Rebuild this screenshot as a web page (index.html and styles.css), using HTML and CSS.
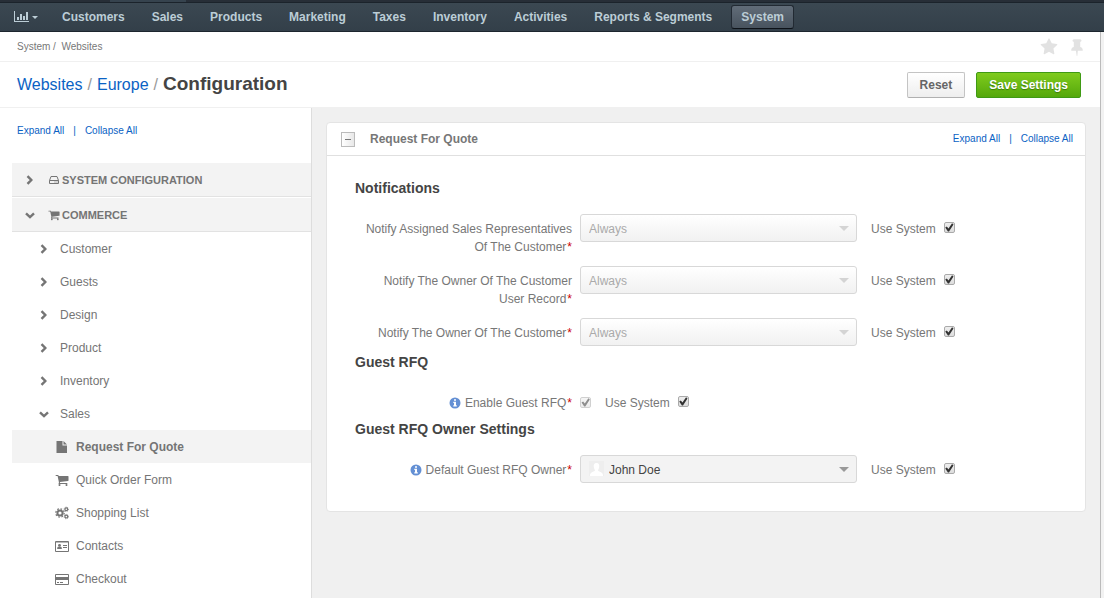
FILE: index.html
```html
<!DOCTYPE html>
<html lang="en">
<head>
<meta charset="utf-8">
<title>Configuration - Europe - Websites</title>
<meta name="viewport" content="width=device-width, initial-scale=1">
<link rel="stylesheet" href="styles.css">
</head>
<body>
<svg class="sprite" aria-hidden="true">
  <symbol id="cart" viewBox="0 0 1792 1792"><path d="M704 1536q0 52-38 90t-90 38-90-38-38-90 38-90 90-38 90 38 38 90zm896 0q0 52-38 90t-90 38-90-38-38-90 38-90 90-38 90 38 38 90zm128-1088v512q0 24-16.5 42.5t-40.5 21.5l-1044 122q13 60 13 70 0 16-24 64h920q26 0 45 19t19 45-19 45-45 19h-1024q-26 0-45-19t-19-45q0-11 8-31.5t16-36 21.5-40 15.5-29.5l-177-823h-204q-26 0-45-19t-19-45 19-45 45-19h256q16 0 28.5 6.5t19.5 15.5 13 24.5 8 26 5.5 29.5 4.5 26h1201q26 0 45 19t19 45z"/></symbol>
  <symbol id="star" viewBox="0 0 1792 1792"><path d="M1728 647q0 22-26 48l-363 354 86 500q1 7 1 20 0 21-10.5 35.5t-30.5 14.5q-19 0-40-12l-449-236-449 236q-22 12-40 12-21 0-31.5-14.5t-10.5-35.5q0-6 2-20l86-500-364-354q-25-27-25-48 0-37 56-46l502-73 225-455q19-41 49-41t49 41l225 455 502 73q56 9 56 46z"/></symbol>
  <symbol id="pin" viewBox="0 0 1792 1792"><path d="M1472 1216q0 26-19 45t-45 19h-429l-51 483q-2 12-10.5 20.5t-20.5 8.5h-1q-27 0-32-27l-76-485h-404q-26 0-45-19t-19-45q0-123 78.5-221.5t177.5-98.5v-512q-52 0-90-38t-38-90 38-90 90-38h640q52 0 90 38t38 90-38 90-90 38v512q99 0 177.5 98.5t78.5 221.5z"/></symbol>
  <symbol id="right" viewBox="0 0 10 10"><path d="M2.5 1.2 6.3 5 2.5 8.8" fill="none" stroke="currentColor" stroke-width="2.4"/></symbol>
  <symbol id="down" viewBox="0 0 10 10"><path d="M1 3.4 5 7.2 9 3.4" fill="none" stroke="currentColor" stroke-width="2.4"/></symbol>
  <symbol id="drive" viewBox="0 0 12 12"><path d="M1.5 6.5 3 2.500h6l1.500 4v3h-9zM1.500 6.500h9M6.500 8h1M8.500 8h1" fill="none" stroke="currentColor"/></symbol>
  <symbol id="file" viewBox="0 0 12 14"><path d="M.5 1h6v4.500h4.500V13H.5zM7.500 1 11 4.500H7.500z"/></symbol>
  <symbol id="cogs" viewBox="0 0 14 14"><g fill="none" stroke="currentColor"><circle cx="5" cy="7" r="2.600" stroke-width="2"/><circle cx="5" cy="7" r="4.200" stroke-width="1.200" stroke-dasharray="1.650 1.650"/><circle cx="11.300" cy="3.300" r="1.400" stroke-width="1.200"/><circle cx="11.300" cy="3.300" r="2.200" stroke-width=".8" stroke-dasharray=".86 .86"/><circle cx="11.300" cy="10.600" r="1.400" stroke-width="1.200"/><circle cx="11.300" cy="10.600" r="2.200" stroke-width=".8" stroke-dasharray=".86 .86"/></g></symbol>
  <symbol id="card" viewBox="0 0 14 14"><path d="M.5 2.500h13v10H.5z" fill="none" stroke="currentColor"/><path d="M1 2h12v1.500H1z"/><circle cx="4.500" cy="6.300" r="1.400"/><path d="M2.200 10V8.800Q2.600 7.500 4.500 7.500T6.800 8.800V10zM8 6h4v1H8zM8 8h4v1H8z"/></symbol>
  <symbol id="credit" viewBox="0 0 14 14"><path d="M.5 2.500h13v10H.5z" fill="none" stroke="currentColor"/><path d="M1 5h12v3H1zM2 10h2v1H2zM5 10h3v1H5z"/></symbol>
  <symbol id="info" viewBox="0 0 12 12"><circle cx="6" cy="6" r="5.500"/><path fill="#fff" d="M5 2.200h2v1.600H5zM4.300 4.800H7v3.400h.8v1.200H4.300V8.200H5V6h-.7z"/></symbol>
</svg>

<header class="top">
  <div class="strip"></div>
  <nav class="nav">
    <a class="nav-item nav-dash" href="#" aria-label="Dashboards">
      <svg width="15" height="12" viewBox="0 0 15 12"><path d="M0 0h1v10h14v1H0zM3 6h2v3H3zM6 3h2v6H6zM9 5h2v4H9zM12 1h2v8h-2z"/></svg>
      <i class="nav-caret"></i>
    </a>
    <a class="nav-item" href="#">Customers</a>
    <a class="nav-item" href="#">Sales</a>
    <a class="nav-item" href="#">Products</a>
    <a class="nav-item" href="#">Marketing</a>
    <a class="nav-item" href="#">Taxes</a>
    <a class="nav-item" href="#">Inventory</a>
    <a class="nav-item" href="#">Activities</a>
    <a class="nav-item" href="#">Reports &amp; Segments</a>
    <a class="nav-item nav-active" href="#">System</a>
  </nav>
</header>

<div class="page">
  <div class="crumbs">
    <span>System /&nbsp; Websites</span>
    <div class="marks">
      <button class="mark" aria-label="Favorite"><svg width="18" height="18"><use href="#star"/></svg></button>
      <button class="mark" aria-label="Pin"><svg width="18" height="18"><use href="#pin"/></svg></button>
    </div>
  </div>
  <div class="title">
    <div class="path"><a href="#">Websites</a><span class="slash">/</span><a href="#">Europe</a><span class="slash">/</span><h1>Configuration</h1></div>
    <div class="actions">
      <button class="btn">Reset</button>
      <button class="btn btn-save">Save Settings</button>
    </div>
  </div>

  <div class="columns">
    <aside class="side">
      <div class="toggles side-toggles"><a href="#">Expand All</a><span>|</span><a href="#">Collapse All</a></div>
      <nav class="tree">
        <a class="group" href="#"><svg class="chev"><use href="#right"/></svg><svg class="gicon"><use href="#drive"/></svg>SYSTEM CONFIGURATION</a>
        <a class="group" href="#"><svg class="chev"><use href="#down"/></svg><svg class="gicon"><use href="#cart"/></svg>COMMERCE</a>
        <a class="node" href="#"><svg class="chev"><use href="#right"/></svg>Customer</a>
        <a class="node" href="#"><svg class="chev"><use href="#right"/></svg>Guests</a>
        <a class="node" href="#"><svg class="chev"><use href="#right"/></svg>Design</a>
        <a class="node" href="#"><svg class="chev"><use href="#right"/></svg>Product</a>
        <a class="node" href="#"><svg class="chev"><use href="#right"/></svg>Inventory</a>
        <a class="node" href="#"><svg class="chev"><use href="#down"/></svg>Sales</a>
        <a class="leaf leaf-active" href="#"><svg class="licon"><use href="#file"/></svg>Request For Quote</a>
        <a class="leaf" href="#"><svg class="licon"><use href="#cart"/></svg>Quick Order Form</a>
        <a class="leaf" href="#"><svg class="licon"><use href="#cogs"/></svg>Shopping List</a>
        <a class="leaf" href="#"><svg class="licon"><use href="#card"/></svg>Contacts</a>
        <a class="leaf" href="#"><svg class="licon"><use href="#credit"/></svg>Checkout</a>
      </nav>
    </aside>

    <main class="main">
      <section class="panel">
        <div class="panel-head">
          <button class="fold" aria-label="Collapse section"></button>
          <h2>Request For Quote</h2>
          <div class="toggles"><a href="#">Expand All</a><span>|</span><a href="#">Collapse All</a></div>
        </div>
        <form class="panel-body">
          <h3>Notifications</h3>
          <div class="rows">
            <div class="row">
              <label class="label" for="n1">Notify Assigned Sales Representatives Of The Customer<em>*</em></label>
              <div class="pick"><select id="n1" disabled><option>Always</option></select></div>
              <label class="use">Use System <input type="checkbox" checked></label>
            </div>
            <div class="row">
              <label class="label" for="n2">Notify The Owner Of The Customer User Record<em>*</em></label>
              <div class="pick"><select id="n2" disabled><option>Always</option></select></div>
              <label class="use">Use System <input type="checkbox" checked></label>
            </div>
            <div class="row">
              <label class="label" for="n3">Notify The Owner Of The Customer<em>*</em></label>
              <div class="pick"><select id="n3" disabled><option>Always</option></select></div>
              <label class="use">Use System <input type="checkbox" checked></label>
            </div>
          </div>
          <h3>Guest RFQ</h3>
          <div class="row">
            <label class="label" for="g1"><svg class="info"><use href="#info"/></svg>Enable Guest RFQ<em>*</em></label>
            <div class="tick"><input id="g1" type="checkbox" checked disabled></div>
            <label class="use">Use System <input type="checkbox" checked></label>
          </div>
          <h3>Guest RFQ Owner Settings</h3>
          <div class="row">
            <label class="label" for="o1"><svg class="info"><use href="#info"/></svg>Default Guest RFQ Owner<em>*</em></label>
            <div class="pick pick-user">
              <select id="o1" disabled><option>John Doe</option></select>
              <svg class="avatar" viewBox="0 0 15 15"><path fill="#eee" d="M0 0h15v15H0z"/><path fill="#fff" d="M7.500 2C10 2 10.500 4 10.200 6 10 8 9 9 9 9.500c0 1 5 1.500 5 4.500V15H1v-1c0-3 5-3.500 5-4.500C6 9 5 8 4.800 6 4.500 4 5 2 7.500 2z"/></svg>
            </div>
            <label class="use">Use System <input type="checkbox" checked></label>
          </div>
        </form>
      </section>
    </main>
  </div>
</div>
</body>
</html>
```
FILE: styles.css
```css
* { box-sizing: border-box; }
html, body { height: 100%; }
body {
  margin: 0;
  display: flex;
  flex-direction: column;
  background: #f2f2f2;
  color: #777;
  font: 12px/18px "Liberation Sans", Arial, sans-serif;
}
a { color: #0a62c4; text-decoration: none; }
button { font: inherit; cursor: pointer; }
h1, h2, h3 { margin: 0; }
svg { fill: currentColor; flex: none; }
.sprite { display: none; }

.top { border-bottom: 1px solid #1d262e; }
.strip {
  height: 3px;
  background: linear-gradient(90deg, #272e37 110px, #36434e 110px 186px, #272e37 186px);
  border-bottom: 1px solid #1b232b;
}
.nav {
  display: flex;
  align-items: center;
  gap: 7px;
  height: 28px;
  padding-left: 4px;
  background: linear-gradient(#3b4852, #333f49);
}
.nav-item {
  display: flex;
  align-items: center;
  height: 24px;
  padding: 0 9px;
  border: 1px solid transparent;
  border-radius: 3px;
  color: #bccdd6;
  font-weight: bold;
}
.nav-dash { gap: 3px; padding-right: 6px; }
.nav-caret { border: 3px solid transparent; border-top-color: currentColor; border-bottom: 0; }
.nav-active {
  margin-left: 2px;
  background: linear-gradient(#616c78, #48535e);
  border-color: #222a33;
  border-bottom-color: #0d1218;
}

.page {
  flex: 1 0 auto;
  display: flex;
  flex-direction: column;
  margin-right: 3px;
  border-right: 1px solid #bbb;
  background: #fff;
}
.crumbs {
  display: flex;
  align-items: center;
  justify-content: space-between;
  height: 30px;
  padding: 0 14px 0 17px;
  border-bottom: 1px solid #f0f0f0;
  font-size: 10px;
}
.marks { display: flex; gap: 10px; }
.mark { display: flex; padding: 0; border: 0; background: none; color: #e2e2e2; }
.title {
  display: flex;
  align-items: center;
  justify-content: space-between;
  height: 46px;
  padding: 0 19px 0 17px;
  border-bottom: 1px solid #f0f0f0;
}
.path { display: flex; align-items: baseline; font-size: 16px; }
.path h1 { color: #444; font-size: 19px; }
.slash { margin: 0 5px; color: #999; }
.actions { display: flex; gap: 11px; }
.btn {
  height: 26px;
  padding: 0 12px;
  border: 1px solid #c4c4c4;
  border-bottom-color: #b0b0b0;
  border-radius: 2px;
  background: linear-gradient(#fff, #eee);
  color: #666;
  font-weight: bold;
}
.btn-save {
  border-color: #3f9a14;
  background: linear-gradient(#7fcb1d, #55a80c);
  color: #fff;
  text-shadow: 0 1px 1px #3c7a08;
}

.columns { flex: 1; display: flex; }
.side { flex: 0 0 312px; padding: 14px 0 2px 12px; border-right: 1px solid #ddd; }
.toggles { display: flex; font-size: 10px; }
.toggles span { margin: 0 9px; color: #0a62c4; }
.side-toggles { padding-left: 5px; margin-bottom: 23px; }
.tree { display: flex; flex-direction: column; }
.tree a { display: flex; align-items: center; color: #757575; }
.tree .group {
  height: 34px;
  padding-left: 13px;
  border-bottom: 1px solid #e2e2e2;
  background: #f3f3f3;
  font-size: 11px;
  font-weight: bold;
}
.group + .group { margin-top: 1px; }
.chev { width: 10px; height: 10px; }
.gicon { width: 12px; height: 12px; margin: 0 2px 0 13px; }
.node { height: 33px; padding-left: 27px; gap: 11px; }
.leaf { height: 33px; padding-left: 43px; gap: 7px; }
.licon { width: 14px; height: 14px; }
.tree .leaf-active { background: #f3f3f3; font-weight: bold; }

.main { flex: 1; padding: 14px; background: #f0f0f0; }
.panel { border: 1px solid #e4e4e4; border-radius: 4px; background: #fff; }
.panel-head {
  display: flex;
  align-items: center;
  height: 33px;
  padding: 0 12px 0 14px;
  border-bottom: 1px solid #e0e0e0;
}
.panel-head h2 { flex: 1; padding-left: 15px; font-size: 12px; }
.fold {
  display: grid;
  place-items: center;
  width: 14px;
  height: 15px;
  padding: 0;
  border: 1px solid #bbb;
  background: linear-gradient(90deg, #fff, #e8e8e8);
}
.fold::before { content: ""; width: 6px; height: 1px; background: #777; }
.panel-body { padding: 22px 28px 28px; }
.panel-body h3 { margin: 6px 0 16px; color: #444; font-size: 14px; line-height: 20px; }
.panel-body h3:first-child { margin-top: 0; }
.rows { display: grid; gap: 10px; }
.row { display: flex; align-items: flex-start; min-height: 25px; }
.label { width: 217px; padding: 6px 0 0 8px; text-align: right; }
.label em { margin-left: 1px; color: #c00; font-style: normal; }
.info { width: 12px; height: 12px; margin-right: 4px; vertical-align: -2px; color: #6490d4; }
.pick { position: relative; width: 277px; margin-left: 8px; }
.pick::after {
  content: "";
  position: absolute;
  top: 12px;
  right: 8px;
  border: 5px solid transparent;
  border-top-color: #d4d4d4;
  border-bottom: 0;
}
select {
  appearance: none;
  display: block;
  width: 100%;
  height: 28px;
  padding: 1px 8px 0;
  border: 1px solid #d8d8d8;
  border-radius: 3px;
  background: linear-gradient(#fff, #f1f1f1);
  color: #aaa;
  font: inherit;
  opacity: 1;
}
.pick-user select { padding-left: 28px; background: #f3f3f3; color: #444; }
.pick-user::after { border-top-color: #999; }
.avatar { position: absolute; top: 6px; left: 9px; width: 15px; height: 15px; }
.use { display: flex; align-items: flex-start; gap: 8px; padding: 6px 0 0 14px; }
.tick { display: flex; padding: 9px 0 0 8px; }
input[type="checkbox"] {
  appearance: none;
  display: grid;
  place-items: center;
  width: 11px;
  height: 11px;
  margin: 0;
  border: 1px solid #aaa;
  border-radius: 2px;
  background: linear-gradient(#eee, #ddd);
}
.use input { margin-top: 2px; }
input:checked::before {
  content: "";
  width: 9px;
  height: 9px;
  background: #333;
  clip-path: polygon(6% 50%, 24% 38%, 42% 60%, 82% 4%, 98% 16%, 48% 94%, 36% 94%);
}
input:disabled { opacity: .55; }
```
